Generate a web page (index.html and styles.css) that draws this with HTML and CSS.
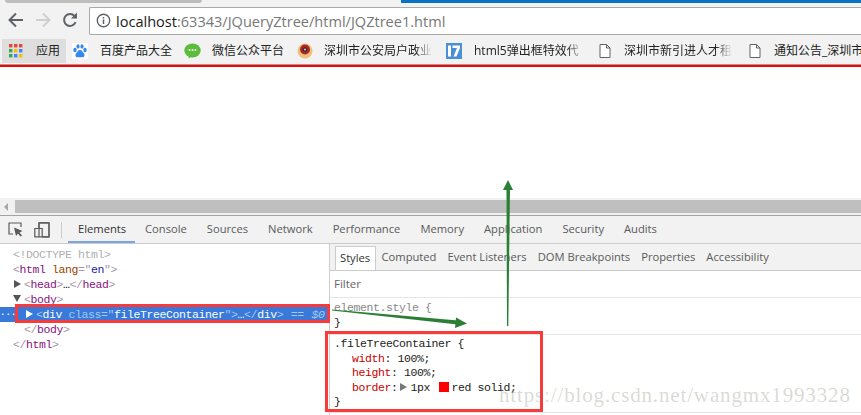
FILE: index.html
```html
<!DOCTYPE html>
<html lang="zh">
<head>
<meta charset="utf-8">
<title>JQZtree1</title>
<link rel="stylesheet" href="styles.css">
</head>
<body>
<div class="tabstrip">
  <div class="tab-edge"></div>
  <div class="win-btn"></div>
</div>
<div class="toolbar">
  <svg class="nav" width="18" height="18" viewBox="0 0 18 18"><path d="M16 9H3M9 2.500 2.500 9 9 15.500" fill="none" stroke="#5f6368" stroke-width="2"/></svg>
  <svg class="nav" width="18" height="18" viewBox="0 0 18 18"><path d="M2 9h13M9 2.500 15.500 9 9 15.500" fill="none" stroke="#cfcfcf" stroke-width="2"/></svg>
  <svg class="nav" width="18" height="18" viewBox="0 0 18 18"><path d="M14.600 11.200A6 6 0 1 1 13.600 5" fill="none" stroke="#5f6368" stroke-width="2"/><path d="M10 7.600h6v-6z" fill="#5f6368"/></svg>
  <div class="omnibox">
    <svg class="info" width="15" height="15" viewBox="0 0 15 15"><circle cx="7.500" cy="7.500" r="6.200" fill="none" stroke="#5f6368" stroke-width="1.400"/><path d="M7.500 6.500v4.500M7.500 4v1.500" stroke="#5f6368" stroke-width="1.500"/></svg>
    <span class="host">localhost</span><span class="url">:63343/JQueryZtree/html/JQZtree1.html</span>
  </div>
</div>
<div class="bookmarks">
  <div class="bm bm-apps">
    <svg class="ic" width="14" height="14" viewBox="0 0 14 14"><g><rect x="0" y="0" width="3.400" height="3.400" fill="#e8453c"/><rect x="5" y="0" width="3.400" height="3.400" fill="#e8453c"/><rect x="10" y="0" width="3.400" height="3.400" fill="#e8453c"/><rect x="0" y="5" width="3.400" height="3.400" fill="#34a853"/><rect x="5" y="5" width="3.400" height="3.400" fill="#fbbc05"/><rect x="10" y="5" width="3.400" height="3.400" fill="#4285f4"/><rect x="0" y="10" width="3.400" height="3.400" fill="#34a853"/><rect x="5" y="10" width="3.400" height="3.400" fill="#4285f4"/><rect x="10" y="10" width="3.400" height="3.400" fill="#fbbc05"/></g></svg>
    <span class="bm-label">应用</span>
  </div>
  <div class="bm bm-baidu">
    <svg class="ic" width="16" height="16" viewBox="0 0 16 16"><rect width="16" height="16" fill="#fff"/><ellipse cx="3" cy="7" rx="1.700" ry="2.200" fill="#3a86f0"/><ellipse cx="6" cy="3.400" rx="1.600" ry="2.200" fill="#3a86f0"/><ellipse cx="10" cy="3.400" rx="1.600" ry="2.200" fill="#3a86f0"/><ellipse cx="13" cy="7" rx="1.700" ry="2.200" fill="#3a86f0"/><path d="M8 7c-2 0-2.400 2-4 3.400C2.800 12 3.600 14.500 6 14.200c1-.1 3-.1 4 0 2.400.3 3.200-2.200 2-3.800C10.400 9 10 7 8 7z" fill="#3a86f0"/></svg>
    <span class="bm-label">百度产品大全</span>
  </div>
  <div class="bm bm-wechat">
    <svg class="ic" width="17" height="16" viewBox="0 0 17 16"><ellipse cx="8.500" cy="7.500" rx="8.200" ry="7" fill="#5bbd3a"/><path d="M5 12.500 4.500 15.500 8 13.500z" fill="#5bbd3a"/><circle cx="5.500" cy="7" r="1" fill="#fff"/><circle cx="8.500" cy="7" r="1" fill="#fff"/><circle cx="11.500" cy="7" r="1" fill="#fff"/></svg>
    <span class="bm-label">微信公众平台</span>
  </div>
  <div class="bm bm-police">
    <svg class="ic" width="16" height="16" viewBox="0 0 16 16"><circle cx="8" cy="8" r="7.500" fill="#eec27c"/><circle cx="8" cy="6.500" r="5" fill="#b3261e"/><circle cx="8" cy="6.500" r="2.300" fill="#1d2d6b"/><circle cx="8" cy="6.500" r="1" fill="#f4d34a"/></svg>
    <span class="bm-label bm-fade">深圳市公安局户政业</span>
  </div>
  <div class="bm bm-h5">
    <svg class="ic" width="16" height="16" viewBox="0 0 16 16"><rect width="16" height="16" fill="#4a90d9"/><path d="M2 2.500h3v11H2zM6.500 2.500H14V5l-3.500 8.500H7.500L11 5H6.500z" fill="#fff"/></svg>
    <span class="bm-label bm-fade">html5弹出框特效代</span>
  </div>
  <div class="bm bm-doc1">
    <svg class="ic" width="12" height="14" viewBox="0 0 12 14"><path d="M1 .5h6.500L11 4v9.500H1zM7.500.5V4H11" fill="#fff" stroke="#5f6368"/></svg>
    <span class="bm-label bm-fade">深圳市新引进人才租</span>
  </div>
  <div class="bm bm-doc2">
    <svg class="ic" width="12" height="14" viewBox="0 0 12 14"><path d="M1 .5h6.500L11 4v9.500H1zM7.500.5V4H11" fill="#fff" stroke="#5f6368"/></svg>
    <span class="bm-label">通知公告_深圳市</span>
  </div>
</div>
<div class="page-view"></div>
<div class="hscroll">
  <svg class="hscroll-arrow" width="5" height="8" viewBox="0 0 5 8"><path d="M4 0v8L0 4z" fill="#a8a8a8"/></svg>
  <div class="hscroll-thumb"></div>
</div>
<div class="devtools">
  <div class="dt-tabs">
    <svg class="dt-ic" width="15" height="15" viewBox="0 0 15 15"><path d="M13 5V1H1v11h4" fill="none" stroke="#5a5a5a" stroke-width="1.200"/><path d="M6 5.500 14.500 9 11.500 10.500 14 13.500 12.500 14.500 10 11.500 8 14z" fill="#5a5a5a"/></svg>
    <svg class="dt-ic dt-ic2" width="16" height="16" viewBox="0 0 16 16"><path d="M5 .8h10v14H5zM.8 6.500h7.400v8.300H.8z" fill="#f1f1f1" stroke="#5a5a5a" stroke-width="1.200"/><path d="M5 6V.8h10v14H8" fill="none" stroke="#5a5a5a" stroke-width="1.200"/></svg>
    <div class="dt-sep"></div>
    <div class="dt-tab dt-tab-on">Elements</div>
    <div class="dt-tab">Console</div>
    <div class="dt-tab">Sources</div>
    <div class="dt-tab">Network</div>
    <div class="dt-tab">Performance</div>
    <div class="dt-tab">Memory</div>
    <div class="dt-tab">Application</div>
    <div class="dt-tab">Security</div>
    <div class="dt-tab">Audits</div>
  </div>
  <div class="dt-main">
    <div class="dom">
      <div class="dl dl-0"><span class="c-doc">&lt;!DOCTYPE html&gt;</span></div>
      <div class="dl dl-0"><span class="c-br">&lt;</span><span class="c-tag">html</span> <span class="c-attr">lang</span><span class="c-br">="</span><span class="c-val">en</span><span class="c-br">"&gt;</span></div>
      <div class="dl dl-1"><i class="tri tri-r"></i><span class="c-br">&lt;</span><span class="c-tag">head</span><span class="c-br">&gt;</span>…<span class="c-br">&lt;/</span><span class="c-tag">head</span><span class="c-br">&gt;</span></div>
      <div class="dl dl-1"><i class="tri tri-d"></i><span class="c-br">&lt;</span><span class="c-tag">body</span><span class="c-br">&gt;</span></div>
      <div class="dl dl-sel"><span class="dots">...</span><i class="tri tri-w"></i><span class="s-dim">&lt;</span>div <span class="s-dim">class="</span>fileTreeContainer<span class="s-dim">"&gt;</span>…<span class="s-dim">&lt;/</span>div<span class="s-dim s-end">&gt; == <em>$0</em></span></div>
      <div class="dl dl-2"><span class="c-br">&lt;/</span><span class="c-tag">body</span><span class="c-br">&gt;</span></div>
      <div class="dl dl-0"><span class="c-br">&lt;/</span><span class="c-tag">html</span><span class="c-br">&gt;</span></div>
    </div>
    <div class="side">
      <div class="side-tabs">
        <div class="st st-on">Styles</div>
        <div class="st">Computed</div>
        <div class="st">Event Listeners</div>
        <div class="st">DOM Breakpoints</div>
        <div class="st">Properties</div>
        <div class="st">Accessibility</div>
      </div>
      <div class="filter">Filter</div>
      <div class="rule rule-el">
        <div class="cl c-gray">element.style {</div>
        <div class="cl">}</div>
      </div>
      <div class="rule rule-main">
        <div class="cl">.fileTreeContainer {</div>
        <div class="cl pl"><span class="c-prop">width</span>: 100%;</div>
        <div class="cl pl"><span class="c-prop">height</span>: 100%;</div>
        <div class="cl pl"><span class="c-prop">border</span>:<i class="tri tri-g"></i>1px <i class="swatch"></i>red solid;</div>
        <div class="cl">}</div>
      </div>
    </div>
  </div>
</div>
<div class="box box-sel"></div>
<div class="box box-rule"></div>
<svg class="arrows" width="861" height="415" viewBox="0 0 861 415">
  <path d="M506.500 188 L510 188 L508.300 326 L507 326z" fill="#2a7f35"/>
  <path d="M503 190 L508 180 L513 190z" fill="#2a7f35"/>
  <path d="M332 309.500 L458 320.500 L457.500 324.500 L332 310.500z" fill="#2a7f35"/>
  <path d="M456 317.500 L467 323.500 L455 328z" fill="#2a7f35"/>
</svg>
<div class="watermark">https://blog.csdn.net/wangmx1993328</div>
</body>
</html>
```
FILE: styles.css
```css
* { box-sizing: border-box; }
html, body { margin: 0; padding: 0; }
body {
  width: 861px;
  height: 415px;
  overflow: hidden;
  position: relative;
  background: #fff;
  font-family: "Open Sans", "Noto Sans CJK SC", sans-serif;
}
.tabstrip {
  height: 3px;
  background: #f2f2f2;
  display: flex;
  justify-content: space-between;
}
.tab-edge { width: 197px; margin-left: 5px; background: #bdbdbd; border-radius: 0 0 3px 3px; }
.win-btn { width: 460px; background: #0a72c4; }
.toolbar {
  height: 34px;
  background: #f2f2f2;
  display: flex;
  align-items: center;
  padding-left: 7px;
}
.nav { margin-right: 9px; flex: none; }
.nav + .nav + .nav { margin-right: 10px; }
.omnibox {
  flex: 1;
  height: 28px;
  margin-top: 1px;
  background: #fff;
  border: 1px solid #a9a9a9;
  border-right: 0;
  border-radius: 2px 0 0 2px;
  display: flex;
  align-items: center;
  padding-left: 6px;
  font-size: 14.55px;
  white-space: nowrap;
}
.info { margin-right: 5px; }
.host { color: #1a1a1a; }
.url { color: #777; }
.bookmarks {
  height: 28px;
  background: #f2f2f2;
  border-bottom: 1px solid #9d9d9d;
  display: flex;
  align-items: center;
  font-size: 12px;
  color: #222;
  white-space: nowrap;
  overflow: hidden;
}
.bm { display: flex; align-items: center; flex: none; height: 24px; }
.ic { flex: none; }
.bm-label { margin-bottom: 2px; }
.bm-apps { width: 64px; margin-left: 2px; padding-left: 7px; background: #dedede; }
.bm-apps .bm-label { margin-left: 13px; }
.bm-baidu { width: 118px; padding-left: 6px; }
.bm-baidu .bm-label { margin-left: 12px; }
.bm-wechat { width: 113px; }
.bm-wechat .bm-label { margin-left: 11px; }
.bm-police { width: 149px; }
.bm-police .bm-label { margin-left: 11px; width: 108px; overflow: hidden; }
.bm-h5 { width: 153px; }
.bm-h5 .bm-label { margin-left: 12px; width: 110px; overflow: hidden; }
.bm-doc1 { width: 150px; }
.bm-doc1 .bm-label { margin-left: 13px; width: 108px; overflow: hidden; }
.bm-doc2 { width: 112px; }
.bm-doc2 .bm-label { margin-left: 13px; }
.bm-fade { -webkit-mask-image: linear-gradient(to right, #000 85%, transparent); mask-image: linear-gradient(to right, #000 85%, transparent); }
.page-view {
  height: 133px;
  border-top: 2px solid #f00;
  background: #fff;
}
.hscroll {
  height: 18px;
  padding-top: 2px;
  background: #f1f1f1;
  display: flex;
  border-bottom: 1px solid #a3a3a3;
}
.hscroll-arrow { margin: 3px 0 0 4px; flex: none; }
.hscroll-thumb { margin-left: 6px; flex: 1; height: 13px; background: #bfbfbf; }
.devtools { height: 199px; background: #fff; display: flex; flex-direction: column; }
.dt-tabs {
  height: 28px;
  flex: none;
  background: #f2f2f2;
  border-bottom: 1px solid #ccc;
  display: flex;
  align-items: center;
  padding-left: 8px;
  font-size: 11.2px;
  color: #5a5a5a;
}
.dt-ic { flex: none; }
.dt-ic2 { margin-left: 11px; }
.dt-sep { width: 1px; height: 16px; background: #ccc; margin-left: 11px; margin-right: 6px; }
.dt-tab { height: 27px; padding: 0 10px; line-height: 26px; white-space: nowrap; }
.dt-tab-on { color: #333; border-bottom: 2px solid #7aa5e6; padding-right: 9px; width: 67px; }
.dt-main { flex: 1; display: flex; min-height: 0; }
.dom {
  width: 329px;
  flex: none;
  padding-top: 3px;
  font-family: "Liberation Mono", monospace;
  font-size: 11.5px;
  letter-spacing: -.4px;
  white-space: nowrap;
}
.dl { height: 15px; line-height: 15px; position: relative; }
.dl-0 { padding-left: 13px; }
.dl-1 { padding-left: 24px; }
.dl-2 { padding-left: 24px; }
.c-doc { color: #b0b0b0; }
.c-br { color: #a894a6; }
.c-tag { color: #881280; }
.c-attr { color: #994500; }
.c-val { color: #1a1aa6; }
.tri { display: inline-block; width: 0; height: 0; }
.tri-r { position: absolute; left: 14px; top: 3px; border-left: 7px solid #555; border-top: 4px solid transparent; border-bottom: 4px solid transparent; }
.tri-d { position: absolute; left: 13px; top: 3px; border-top: 7px solid #555; border-left: 4px solid transparent; border-right: 4px solid transparent; }
.dl-sel { background: #3879d9; color: #fff; padding-left: 36px; }
.dots { position: absolute; left: 0; top: -1px; font-weight: 700; font-size: 9px; letter-spacing: 0; }
.tri-w { position: absolute; left: 26px; top: 3px; border-left: 7px solid #fff; border-top: 4px solid transparent; border-bottom: 4px solid transparent; }
.s-dim { color: #a9c6f0; }
.s-end { word-spacing: 1.200px; }
.s-dim em { font-style: italic; }
.side { flex: 1; min-width: 0; border-left: 1px solid #ccc; display: flex; flex-direction: column; }
.side-tabs {
  height: 27px;
  flex: none;
  padding-top: 2px;
  background: #f2f2f2;
  border-bottom: 1px solid #ccc;
  display: flex;
  font-size: 11.2px;
  color: #5a5a5a;
  padding-left: 5px;
  white-space: nowrap;
}
.st { line-height: 22px; padding: 0 5.500px; }
.st-on { background: #fff; border: 1px solid #ccc; border-bottom: 0; color: #333; padding: 0 4px; width: 41px; line-height: 22px; }
.filter { height: 27px; flex: none; line-height: 25px; padding-left: 4px; font-size: 11.5px; color: #666; border-bottom: 1px solid #e6e6e6; }
.rule { font-family: "Liberation Mono", monospace; font-size: 11.5px; letter-spacing: -.4px; padding-left: 4px; border-bottom: 1px solid #e4e4e4; white-space: nowrap; }
.rule-el { height: 37px; padding-top: 2px; }
.rule-main { height: 78px; padding-top: 2px; }
.cl { height: 14.500px; line-height: 14.500px; color: #222; }
.rule-el .cl { height: 15px; line-height: 15px; }
.c-gray { color: #888; }
.pl { padding-left: 18px; }
.c-prop { color: #c80000; }
.tri-g { border-left: 7px solid #777; border-top: 4px solid transparent; border-bottom: 4px solid transparent; margin: 0 4px 0 2px; }
.swatch { display: inline-block; width: 10px; height: 10px; background: #f00; margin: 0 3px 0 2px; vertical-align: -1px; }
.box { position: absolute; border: 3px solid #f83a3a; pointer-events: none; }
.box-sel { left: 15px; top: 304px; width: 315px; height: 19px; }
.box-rule { left: 325px; top: 331px; width: 218px; height: 81px; }
.arrows { position: absolute; left: 0; top: 0; pointer-events: none; }
.watermark {
  position: absolute;
  left: 499px;
  top: 383px;
  font-family: "Liberation Serif", serif;
  font-size: 21px;
  letter-spacing: .85px;
  color: rgba(120, 120, 105, .28);
  white-space: nowrap;
}
```
